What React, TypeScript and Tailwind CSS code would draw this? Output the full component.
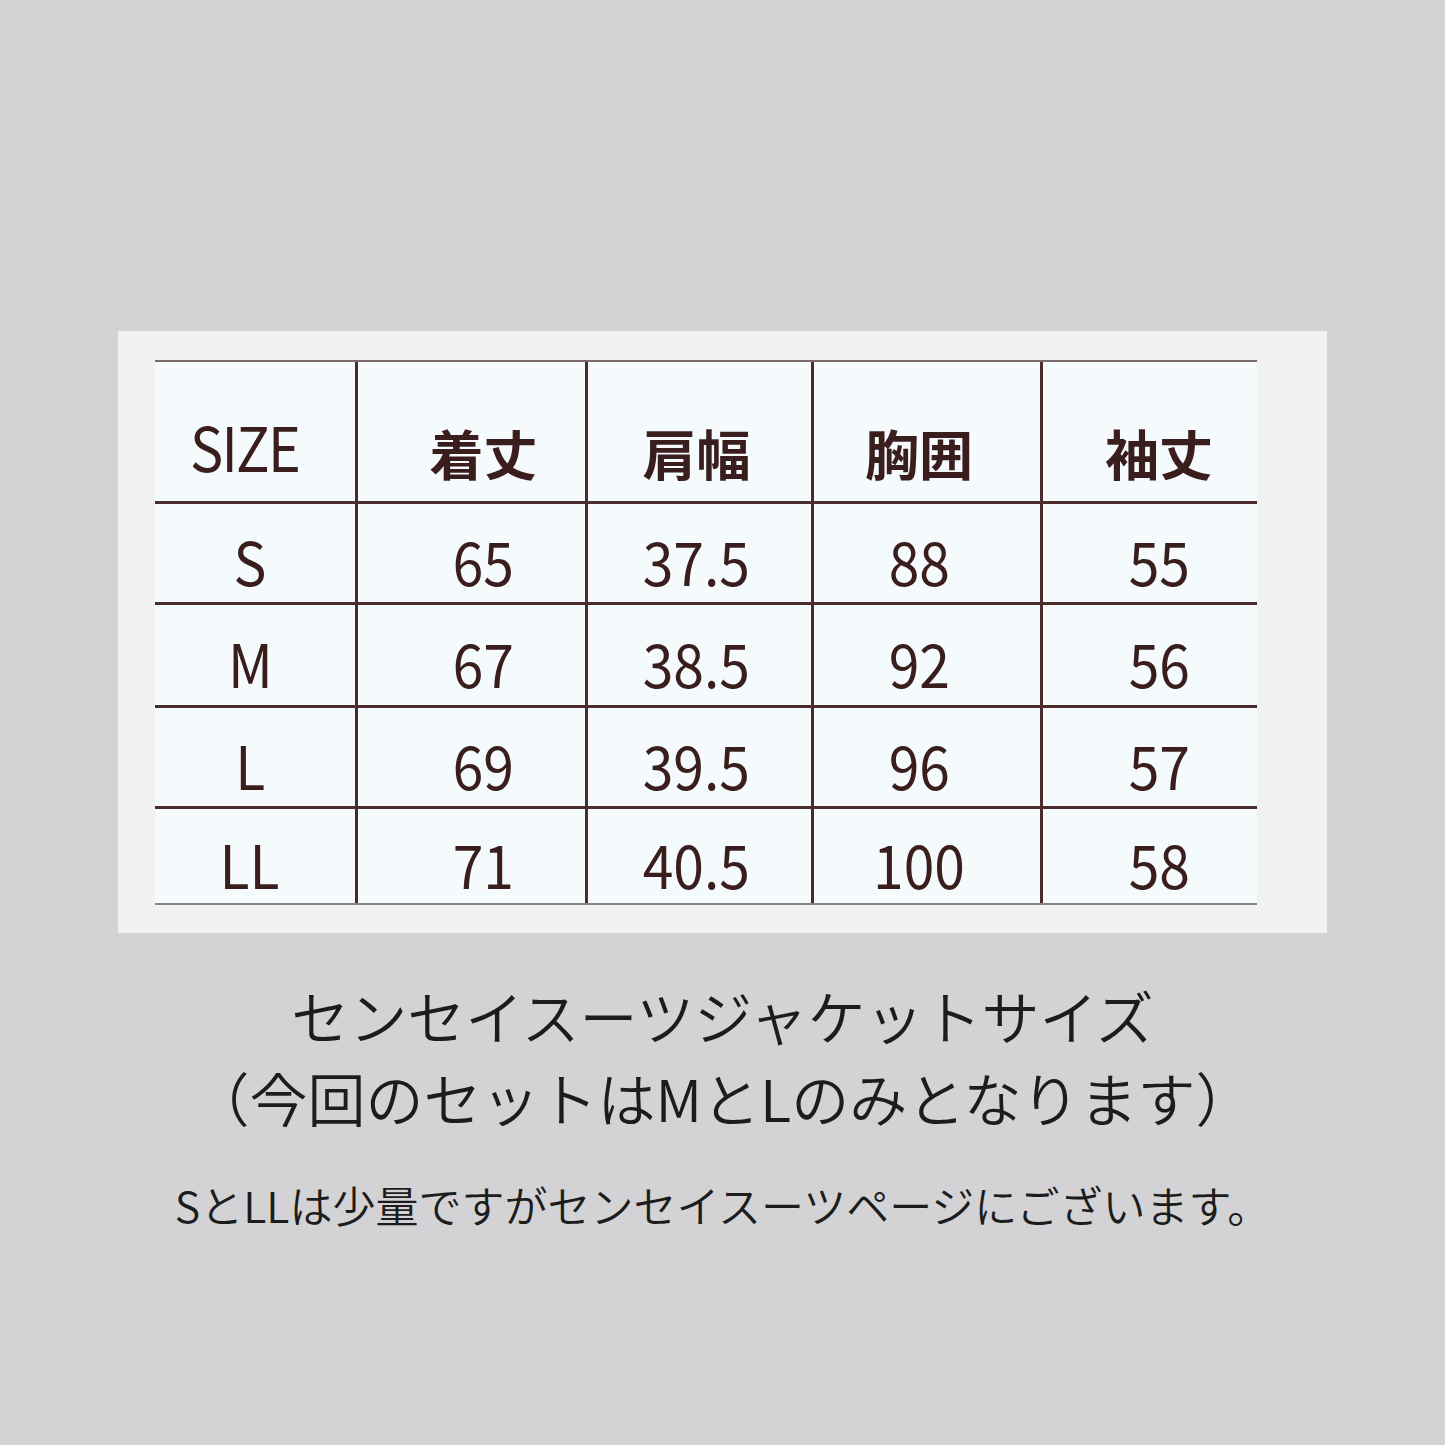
const cols = [200, 230, 226, 229, 217];
const offsets = ["-translate-x-[5px]", "translate-x-[12px]", "-translate-x-[3px]", "-translate-x-[8px]", "translate-x-[9px]"];
const header = ["SIZE", "着丈", "肩幅", "胸囲", "袖丈"];
const rows = [
  ["S", "65", "37.5", "88", "55"],
  ["M", "67", "38.5", "92", "56"],
  ["L", "69", "39.5", "96", "57"],
  ["LL", "71", "40.5", "100", "58"],
];
const rowHeights = ["h-[101px]", "h-[103px]", "h-[101px]", "h-[96px]"];

function Cell({ i, children, className = "" }: { i: number; children: React.ReactNode; className?: string }) {
  return (
    <div
      className={`flex items-center justify-center shrink-0 ${i > 0 ? "border-l-[3px] border-[#4a2c2c]" : ""} ${className}`}
      style={{ width: cols[i] }}
    >
      {children}
    </div>
  );
}

export default function App() {
  return (
    <div
      className="w-[1445px] h-[1445px] bg-[#d3d3d5] pt-[331px] text-[#1c1c1c]"
      style={{ fontFamily: '"Noto Sans CJK JP", "Noto Sans", sans-serif' }}
    >
      {/* table card */}
      <div className="ml-[118px] w-[1209px] h-[602px] bg-[#f1f1f2] pt-[29px] pl-[37px]">
        <div className="w-[1102px] bg-[#f5fbfd] border-t-2 border-[#7a6a6a] text-[#3a1e1e]">
          <div className="flex h-[142px] border-b-[3px] border-[#4a2c2c]">
            {header.map((h, i) => (
              <Cell key={h} i={i} className="pt-[42px]">
                {i === 0 ? (
                  <span className="text-[62px] leading-none tracking-[-2px] scale-x-[0.9] inline-block -translate-x-[10px] -translate-y-[8px]">
                    {h}
                  </span>
                ) : (
                  <span className={`text-[54px] leading-none font-semibold inline-block ${offsets[i]}`}>{h}</span>
                )}
              </Cell>
            ))}
          </div>
          {rows.map((r, ri) => (
            <div
              key={r[0]}
              className={`flex ${rowHeights[ri]} ${ri < 3 ? "border-b-[3px] border-[#4a2c2c]" : "border-b-2 border-[#8a8585]"}`}
            >
              {r.map((v, i) => (
                <Cell key={i} i={i} className="pt-[14px]">
                  <span className={`text-[60px] leading-none inline-block scale-x-[0.92] ${offsets[i]}`}>{v}</span>
                </Cell>
              ))}
            </div>
          ))}
        </div>
      </div>

      {/* caption */}
      <div className="flex flex-col items-center mt-[41px]">
        <p className="text-[58px] leading-[82px] font-[350] whitespace-nowrap">センセイスーツジャケットサイズ</p>
        <p className="text-[58px] leading-[82px] font-[350] whitespace-nowrap">（今回のセットはMとLのみとなります）</p>
        <p className="text-[43px] leading-none font-[350] whitespace-nowrap mt-[45px]">SとLLは少量ですがセンセイスーツページにございます。</p>
      </div>
    </div>
  );
}
